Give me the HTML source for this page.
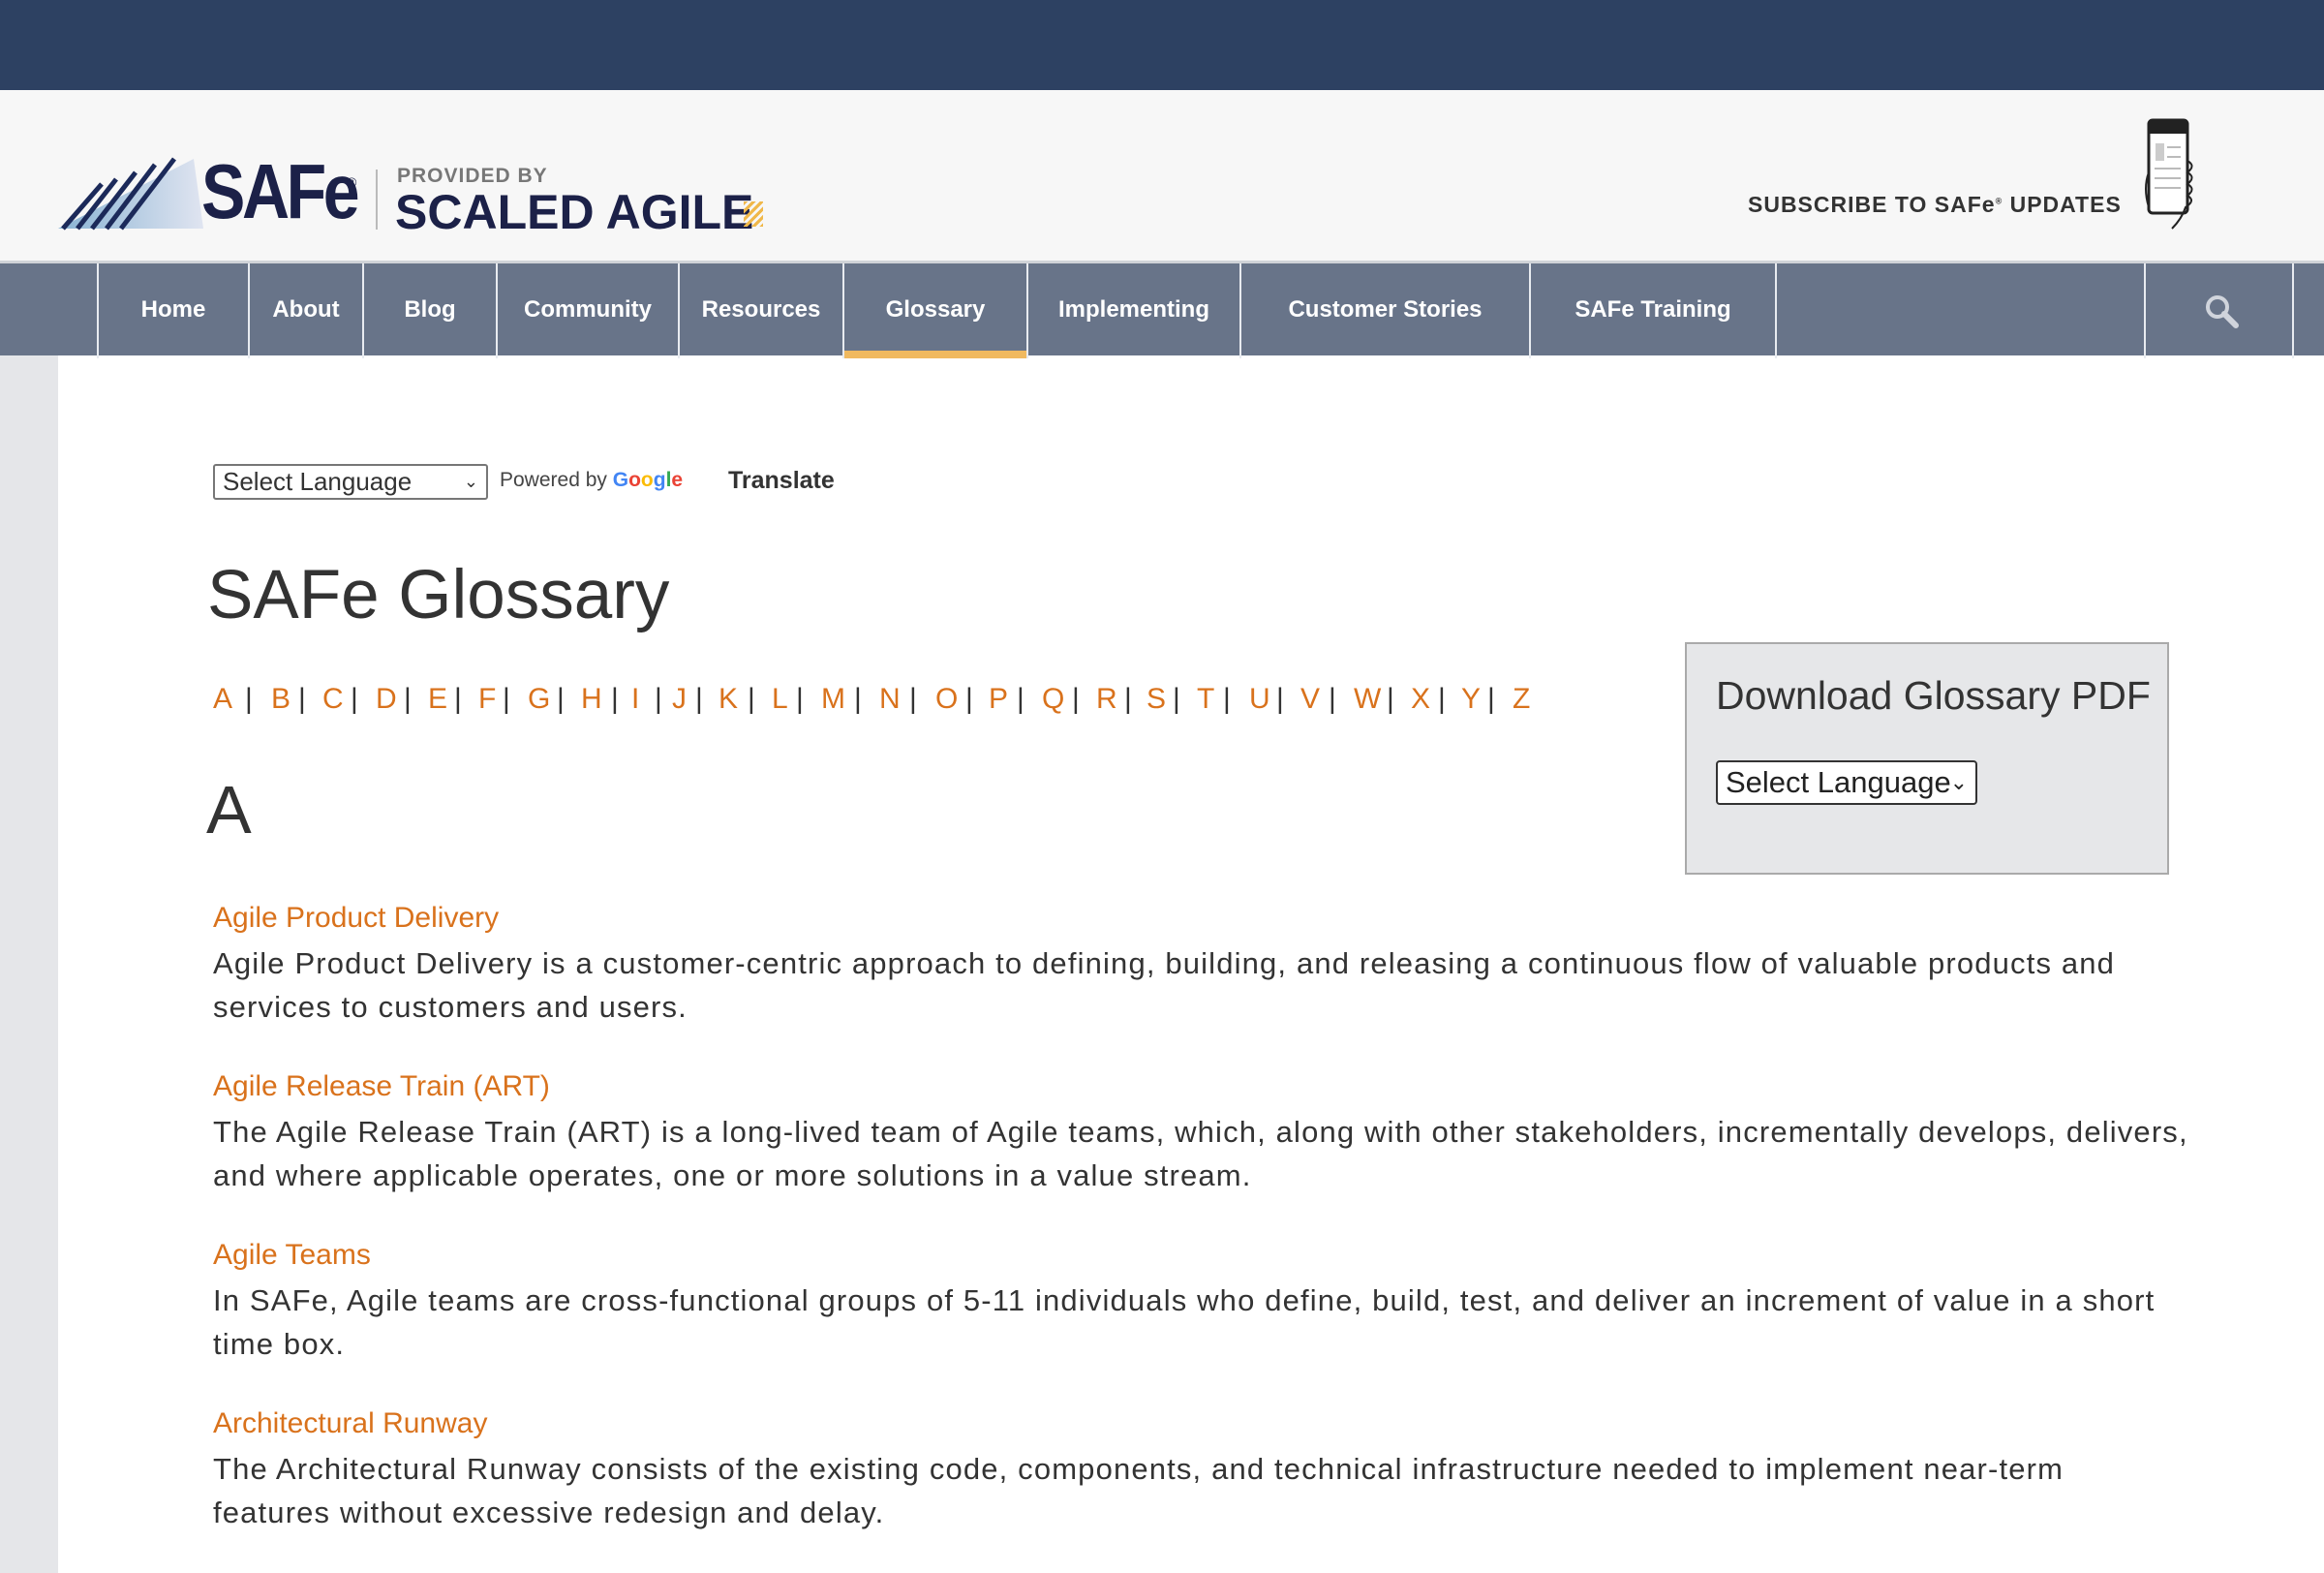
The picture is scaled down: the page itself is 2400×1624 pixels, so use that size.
<!DOCTYPE html>
<html><head><meta charset="utf-8"><style>
*{margin:0;padding:0;box-sizing:border-box}
body{width:2400px;height:1624px;overflow:hidden;background:#fff;font-family:"Liberation Sans",sans-serif;color:#333;position:relative}
.a{position:absolute;white-space:nowrap}
#top{left:0;top:0;width:2400px;height:93px;background:#2d4162}
#hdr{left:0;top:93px;width:2400px;height:176px;background:#f7f7f7}
#nav{left:0;top:269px;width:2400px;height:98px;background:#687489;border-top:3px solid #d0d3d8}
.sep{position:absolute;top:0;width:2px;height:98px;background:#e8ebf0}
.nl{position:absolute;top:0;height:95px;line-height:95px;color:#fff;font-weight:bold;font-size:24px;text-align:center}
#strip{left:0;top:367px;width:60px;height:1257px;background:#e5e6e9}
.lt{color:#d9721c;font-size:30px;top:705px}
.sp{color:#333;font-size:30px;top:705px}
.tt{color:#d9721c;font-size:30px;letter-spacing:0px}
.ds{font-size:31px;letter-spacing:1.15px;line-height:44.5px;color:#333}
</style></head><body>
<div id="top" class="a"></div>
<div id="hdr" class="a"></div>
<!-- logo -->
<svg class="a" style="left:60px;top:160px" width="150" height="80" viewBox="0 0 150 80">
<defs><linearGradient id="g" x1="0" x2="1"><stop offset="0" stop-color="#1b6fb0"/><stop offset="1" stop-color="#c9d2ea"/></linearGradient></defs>
<polygon points="0,76 150,76 140,4" fill="url(#g)" opacity=".5"/>
<g stroke="#1c2a5a" stroke-width="5"><line x1="5" y1="76" x2="45" y2="30"/><line x1="20" y1="76" x2="60" y2="25"/><line x1="35" y1="76" x2="80" y2="18"/><line x1="50" y1="76" x2="100" y2="10"/><line x1="65" y1="76" x2="120" y2="4"/></g>
</svg>
<div class="a" style="left:208px;top:152px;font-size:80px;font-weight:bold;color:#1c2148;letter-spacing:-4px;transform:scaleX(.85);transform-origin:left">SAFe</div>
<div class="a" style="left:358px;top:180px;font-size:14px;color:#1c2148">®</div>
<div class="a" style="left:388px;top:175px;width:2px;height:62px;background:#bbb"></div>
<div class="a" style="left:410px;top:170px;font-size:21px;color:#777;font-weight:bold;letter-spacing:1px">PROVIDED BY</div>
<div class="a" style="left:408px;top:190px;font-size:50px;font-weight:bold;color:#1c2148">SCALED AGILE</div>
<div class="a" style="left:768px;top:208px;width:20px;height:26px;background:repeating-linear-gradient(135deg,#f0b84a 0 3px,transparent 3px 6px)"></div>
<!-- subscribe -->
<div class="a" style="left:1805px;top:198px;font-size:23px;font-weight:bold;color:#333;letter-spacing:1px">SUBSCRIBE TO SAFe<sup style="font-size:9px">®</sup> UPDATES</div>
<svg class="a" style="left:2200px;top:122px" width="80" height="118" viewBox="0 0 80 118">
<rect x="19" y="2" width="40" height="96" rx="4" fill="#fff" stroke="#222" stroke-width="3"/>
<rect x="19" y="2" width="40" height="14" fill="#222"/>
<rect x="26" y="26" width="9" height="18" fill="#ccc"/>
<g stroke="#bbb" stroke-width="2"><line x1="38" y1="30" x2="52" y2="30"/><line x1="38" y1="40" x2="52" y2="40"/><line x1="25" y1="52" x2="52" y2="52"/><line x1="25" y1="62" x2="52" y2="62"/><line x1="25" y1="72" x2="52" y2="72"/></g>
<path d="M59 44q9 5 0 12q9 5 0 12q9 5 0 12q9 5 -2 12q-4 12 -14 22M19 56q-6 16 0 36" fill="none" stroke="#222" stroke-width="2"/>
</svg>
<!-- nav -->
<div id="nav" class="a">
<div class="sep" style="left:100px"></div><div class="sep" style="left:256px"></div><div class="sep" style="left:374px"></div><div class="sep" style="left:512px"></div><div class="sep" style="left:700px"></div><div class="sep" style="left:870px"></div><div class="sep" style="left:1060px"></div><div class="sep" style="left:1280px"></div><div class="sep" style="left:1579px"></div><div class="sep" style="left:1833px"></div><div class="sep" style="left:2214px"></div><div class="sep" style="left:2367px"></div>
<div class="nl" style="left:102px;width:154px">Home</div>
<div class="nl" style="left:258px;width:116px">About</div>
<div class="nl" style="left:376px;width:136px">Blog</div>
<div class="nl" style="left:514px;width:186px">Community</div>
<div class="nl" style="left:702px;width:168px">Resources</div>
<div class="nl" style="left:872px;width:188px">Glossary</div>
<div class="nl" style="left:1062px;width:218px">Implementing</div>
<div class="nl" style="left:1282px;width:297px">Customer Stories</div>
<div class="nl" style="left:1581px;width:252px">SAFe Training</div>
<div style="position:absolute;left:872px;top:90px;width:188px;height:8px;background:#f0b95f"></div>
<svg style="position:absolute;left:2275px;top:30px" width="40" height="40" viewBox="0 0 40 40"><circle cx="15" cy="15" r="10" fill="none" stroke="#d0d4dc" stroke-width="4"/><line x1="22" y1="22" x2="34" y2="34" stroke="#d0d4dc" stroke-width="6" stroke-linecap="round"/></svg>
</div>
<div id="strip" class="a"></div>
<!-- translate -->
<div class="a" style="left:220px;top:479px;width:284px;height:37px;border:2px solid #777;border-radius:3px;font-size:26px;line-height:33px;padding-left:8px;color:#333">Select Language<span style="position:absolute;right:8px;font-size:18px">&#x2304;</span></div>
<div class="a" style="left:516px;top:484px;font-size:21px;color:#444">Powered by <span style="color:#4285f4;font-weight:bold">G</span><span style="color:#ea4335;font-weight:bold">o</span><span style="color:#fbbc05;font-weight:bold">o</span><span style="color:#4285f4;font-weight:bold">g</span><span style="color:#34a853;font-weight:bold">l</span><span style="color:#ea4335;font-weight:bold">e</span></div>
<div class="a" style="left:752px;top:482px;font-size:25px;font-weight:bold;color:#333">Translate</div>
<div class="a" style="left:214px;top:574px;font-size:71px;color:#333">SAFe Glossary</div>
<!-- letters -->
<div class="a lt" style="left:220px">A</div><div class="a lt" style="left:280px">B</div><div class="a lt" style="left:333px">C</div><div class="a lt" style="left:388px">D</div><div class="a lt" style="left:442px">E</div><div class="a lt" style="left:494px">F</div><div class="a lt" style="left:545px">G</div><div class="a lt" style="left:600px">H</div><div class="a lt" style="left:652px">I</div><div class="a lt" style="left:694px">J</div><div class="a lt" style="left:742px">K</div><div class="a lt" style="left:797px">L</div><div class="a lt" style="left:848px">M</div><div class="a lt" style="left:908px">N</div><div class="a lt" style="left:966px">O</div><div class="a lt" style="left:1021px">P</div><div class="a lt" style="left:1076px">Q</div><div class="a lt" style="left:1132px">R</div><div class="a lt" style="left:1184px">S</div><div class="a lt" style="left:1236px">T</div><div class="a lt" style="left:1290px">U</div><div class="a lt" style="left:1343px">V</div><div class="a lt" style="left:1398px">W</div><div class="a lt" style="left:1457px">X</div><div class="a lt" style="left:1509px">Y</div><div class="a lt" style="left:1562px">Z</div>
<div class="a sp" style="left:253px">|</div><div class="a sp" style="left:308px">|</div><div class="a sp" style="left:362px">|</div><div class="a sp" style="left:417px">|</div><div class="a sp" style="left:469px">|</div><div class="a sp" style="left:519px">|</div><div class="a sp" style="left:575px">|</div><div class="a sp" style="left:631px">|</div><div class="a sp" style="left:676px">|</div><div class="a sp" style="left:718px">|</div><div class="a sp" style="left:772px">|</div><div class="a sp" style="left:822px">|</div><div class="a sp" style="left:882px">|</div><div class="a sp" style="left:939px">|</div><div class="a sp" style="left:997px">|</div><div class="a sp" style="left:1050px">|</div><div class="a sp" style="left:1107px">|</div><div class="a sp" style="left:1161px">|</div><div class="a sp" style="left:1211px">|</div><div class="a sp" style="left:1263px">|</div><div class="a sp" style="left:1318px">|</div><div class="a sp" style="left:1372px">|</div><div class="a sp" style="left:1432px">|</div><div class="a sp" style="left:1485px">|</div><div class="a sp" style="left:1536px">|</div>
<div class="a" style="left:213px;top:796px;font-size:70px;color:#333">A</div>
<!-- download box -->
<div class="a" style="left:1740px;top:663px;width:500px;height:240px;background:#e6e7e9;border:2px solid #aaa"></div>
<div class="a" style="left:1772px;top:695px;font-size:41px;color:#333">Download Glossary PDF</div>
<div class="a" style="left:1772px;top:785px;width:270px;height:46px;border:2px solid #333;border-radius:4px;background:#fff;font-size:31px;line-height:42px;padding-left:8px;color:#222">Select Language<span style="position:absolute;right:8px;font-size:22px">&#x2304;</span></div>
<!-- entries -->
<div class="a tt" style="left:220px;top:931px">Agile Product Delivery</div>
<div class="a ds" style="left:220px;top:973px">Agile Product Delivery is a customer-centric approach to defining, building, and releasing a continuous flow of valuable products and<br>services to customers and users.</div>
<div class="a tt" style="left:220px;top:1105px">Agile Release Train (ART)</div>
<div class="a ds" style="left:220px;top:1147px">The Agile Release Train (ART) is a long-lived team of Agile teams, which, along with other stakeholders, incrementally develops, delivers,<br>and where applicable operates, one or more solutions in a value stream.</div>
<div class="a tt" style="left:220px;top:1279px">Agile Teams</div>
<div class="a ds" style="left:220px;top:1321px">In SAFe, Agile teams are cross-functional groups of 5-11 individuals who define, build, test, and deliver an increment of value in a short<br>time box.</div>
<div class="a tt" style="left:220px;top:1453px">Architectural Runway</div>
<div class="a ds" style="left:220px;top:1495px">The Architectural Runway consists of the existing code, components, and technical infrastructure needed to implement near-term<br>features without excessive redesign and delay.</div>
</body></html>
